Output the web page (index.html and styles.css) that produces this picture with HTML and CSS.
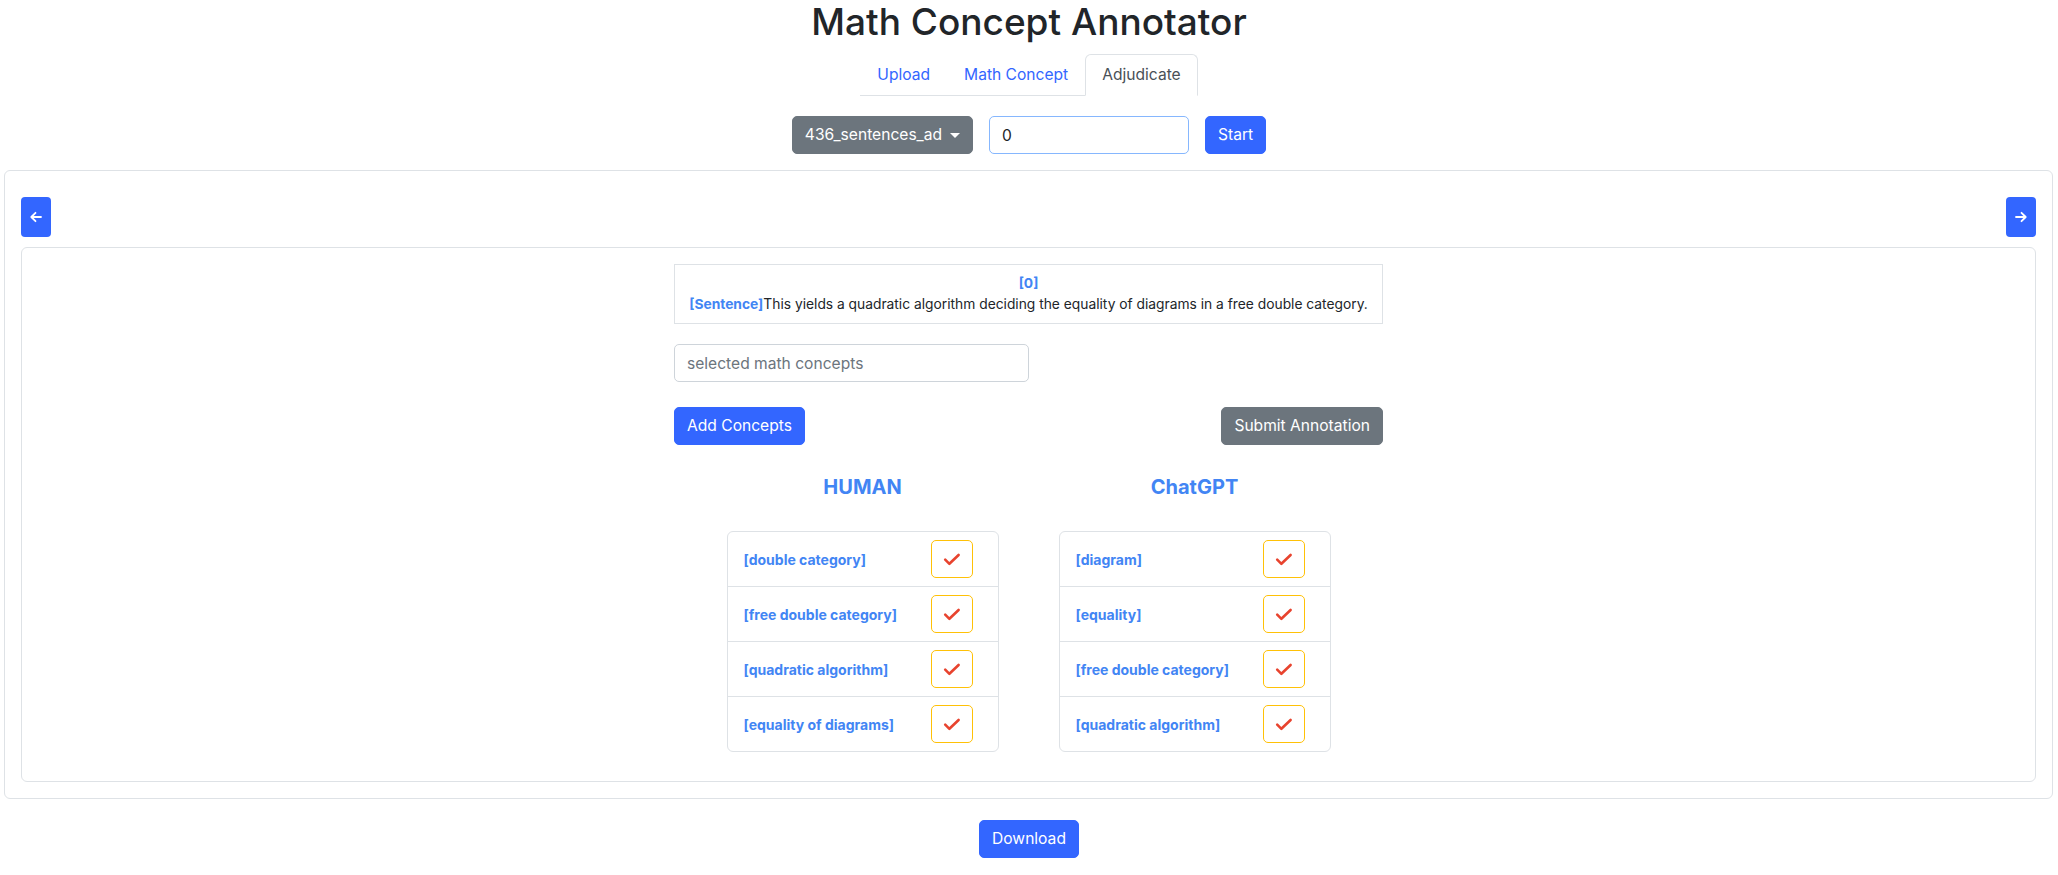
FILE: index.html
```html
<!DOCTYPE html>
<html lang="en">
<head>
<meta charset="utf-8">
<title>Math Concept Annotator</title>
<link rel="stylesheet" href="styles.css">
</head>
<body>
<div class="page">
  <h1 class="title">Math Concept Annotator</h1>
  <ul class="tabs">
    <li><a class="tab">Upload</a></li>
    <li><a class="tab">Math Concept</a></li>
    <li><a class="tab active">Adjudicate</a></li>
  </ul>
  <div class="controls">
    <button class="btn btn-secondary dropdown-toggle">436_sentences_ad<span class="caret"></span></button>
    <input class="field index-field" type="text" value="0">
    <button class="btn btn-primary">Start</button>
  </div>

  <div class="card outer-card">
    <div class="pager">
      <button class="arrow-btn" aria-label="previous">
        <svg width="12" height="12" viewBox="0 0 12 12"><path d="M11 6H1.5M5.5 1.8L1.3 6l4.2 4.2" fill="none" stroke="#fff" stroke-width="1.8" stroke-linecap="round" stroke-linejoin="round"/></svg>
      </button>
      <button class="arrow-btn" aria-label="next">
        <svg width="12" height="12" viewBox="0 0 12 12"><path d="M1 6h9.5M6.5 1.8L10.7 6l-4.2 4.2" fill="none" stroke="#fff" stroke-width="1.8" stroke-linecap="round" stroke-linejoin="round"/></svg>
      </button>
    </div>
    <div class="card inner-card">
      <div class="content">
        <div class="sentence-box">
          <div class="tag">[0]</div>
          <div><span class="tag">[Sentence]</span>This yields a quadratic algorithm deciding the equality of diagrams in a free double category.</div>
        </div>
        <input class="field concepts-field" type="text" placeholder="selected math concepts">
        <div class="actions">
          <button class="btn btn-primary">Add Concepts</button>
          <button class="btn btn-secondary">Submit Annotation</button>
        </div>
        <div class="compare">
          <div class="column">
            <h5 class="col-title">HUMAN</h5>
            <div class="concept-list">
              <div class="concept-row"><span class="concept">[double category]</span><button class="check-btn"><svg width="18" height="13" viewBox="0 0 18 13"><path d="M2.2 6.6l4.2 4.2 9.2-8.8" fill="none" stroke="#e8432e" stroke-width="2.6" stroke-linecap="round" stroke-linejoin="round"/></svg></button></div>
              <div class="concept-row"><span class="concept">[free double category]</span><button class="check-btn"><svg width="18" height="13" viewBox="0 0 18 13"><path d="M2.2 6.6l4.2 4.2 9.2-8.8" fill="none" stroke="#e8432e" stroke-width="2.6" stroke-linecap="round" stroke-linejoin="round"/></svg></button></div>
              <div class="concept-row"><span class="concept">[quadratic algorithm]</span><button class="check-btn"><svg width="18" height="13" viewBox="0 0 18 13"><path d="M2.2 6.6l4.2 4.2 9.2-8.8" fill="none" stroke="#e8432e" stroke-width="2.6" stroke-linecap="round" stroke-linejoin="round"/></svg></button></div>
              <div class="concept-row"><span class="concept">[equality of diagrams]</span><button class="check-btn"><svg width="18" height="13" viewBox="0 0 18 13"><path d="M2.2 6.6l4.2 4.2 9.2-8.8" fill="none" stroke="#e8432e" stroke-width="2.6" stroke-linecap="round" stroke-linejoin="round"/></svg></button></div>
            </div>
          </div>
          <div class="column">
            <h5 class="col-title">ChatGPT</h5>
            <div class="concept-list">
              <div class="concept-row"><span class="concept">[diagram]</span><button class="check-btn"><svg width="18" height="13" viewBox="0 0 18 13"><path d="M2.2 6.6l4.2 4.2 9.2-8.8" fill="none" stroke="#e8432e" stroke-width="2.6" stroke-linecap="round" stroke-linejoin="round"/></svg></button></div>
              <div class="concept-row"><span class="concept">[equality]</span><button class="check-btn"><svg width="18" height="13" viewBox="0 0 18 13"><path d="M2.2 6.6l4.2 4.2 9.2-8.8" fill="none" stroke="#e8432e" stroke-width="2.6" stroke-linecap="round" stroke-linejoin="round"/></svg></button></div>
              <div class="concept-row"><span class="concept">[free double category]</span><button class="check-btn"><svg width="18" height="13" viewBox="0 0 18 13"><path d="M2.2 6.6l4.2 4.2 9.2-8.8" fill="none" stroke="#e8432e" stroke-width="2.6" stroke-linecap="round" stroke-linejoin="round"/></svg></button></div>
              <div class="concept-row"><span class="concept">[quadratic algorithm]</span><button class="check-btn"><svg width="18" height="13" viewBox="0 0 18 13"><path d="M2.2 6.6l4.2 4.2 9.2-8.8" fill="none" stroke="#e8432e" stroke-width="2.6" stroke-linecap="round" stroke-linejoin="round"/></svg></button></div>
            </div>
          </div>
        </div>
      </div>
    </div>
  </div>

  <div class="download-row">
    <button class="btn btn-primary">Download</button>
  </div>
</div>
</body>
</html>
```

FILE: styles.css
```css
* { box-sizing: border-box; }

html, body {
  margin: 0;
  padding: 0;
  background: #fff;
}

body {
  font-family: Inter, "Noto Sans", "Liberation Sans", sans-serif;
  font-size: 16px;
  line-height: 1.5;
  color: #212529;
}

.page {
  display: flex;
  flex-direction: column;
  align-items: center;
}

.title {
  margin: 0;
  font-size: 37px;
  font-weight: 500;
  line-height: 44px;
  color: #212529;
}

.tabs {
  list-style: none;
  margin: 10px 0 0;
  padding: 0;
  display: flex;
  border-bottom: 1px solid #dee2e6;
}

.tab {
  display: block;
  padding: 8px 16px;
  margin-bottom: -1px;
  border: 1px solid transparent;
  border-top-left-radius: 6px;
  border-top-right-radius: 6px;
  color: #3366ff;
  font-size: 15.6px;
  line-height: 24px;
  cursor: pointer;
}

.tab.active {
  color: #495057;
  background: #fff;
  border-color: #dee2e6 #dee2e6 #fff;
}

.controls {
  margin-top: 20px;
  display: flex;
  gap: 16px;
  align-items: center;
}

.btn {
  font-family: inherit;
  font-size: 15.6px;
  line-height: 24px;
  padding: 6px 12px;
  border: 1px solid transparent;
  border-radius: 5px;
  color: #fff;
  cursor: pointer;
  white-space: nowrap;
}

.btn-primary {
  background: #3366ff;
  border-color: #3366ff;
}

.btn-secondary {
  background: #6c757d;
  border-color: #6c757d;
}

.dropdown-toggle {
  display: inline-flex;
  align-items: center;
}

.caret {
  display: inline-block;
  margin-left: 8px;
  width: 0;
  height: 0;
  border-top: 5px solid #fff;
  border-left: 5px solid transparent;
  border-right: 5px solid transparent;
}

.field {
  font-family: inherit;
  font-size: 15.6px;
  line-height: 24px;
  height: 38px;
  padding: 6px 12px;
  border: 1px solid #ced4da;
  border-radius: 5px;
  color: #212529;
  background: #fff;
  outline: none;
}

.field::placeholder {
  color: #6c757d;
}

.index-field {
  width: 200px;
  border-color: #86b7fe;
}

.card {
  border: 1px solid #dee2e6;
  border-radius: 6px;
  background: #fff;
}

.outer-card {
  align-self: stretch;
  margin: 16px 5px 0 4px;
  padding: 16px;
}

.pager {
  margin-top: 10px;
  display: flex;
  justify-content: space-between;
}

.arrow-btn {
  width: 30px;
  height: 40px;
  padding: 0;
  border: none;
  border-radius: 4px;
  background: #3366ff;
  display: flex;
  align-items: center;
  justify-content: center;
  cursor: pointer;
}

.inner-card {
  margin-top: 10px;
  padding: 16px 16px 29px;
}

.content {
  width: 709px;
  margin: 0 auto;
}

.sentence-box {
  border: 1px solid #dee2e6;
  padding: 8px;
  text-align: center;
  font-size: 13.8px;
  line-height: 21px;
  color: #212529;
}

.tag {
  color: #4285f4;
  font-weight: 700;
}

.concepts-field {
  display: block;
  margin-top: 20px;
  width: 355px;
}

.actions {
  margin-top: 25px;
  display: flex;
  justify-content: space-between;
}

.compare {
  display: flex;
  justify-content: center;
}

.column {
  width: 332px;
  display: flex;
  flex-direction: column;
  align-items: center;
}

.col-title {
  margin: 30px 0 0;
  font-size: 20px;
  line-height: 24px;
  font-weight: 700;
  color: #4285f4;
}

.concept-list {
  margin-top: 32px;
  width: 272px;
  border: 1px solid #dee2e6;
  border-radius: 6px;
}

.concept-row {
  display: flex;
  align-items: center;
  justify-content: space-between;
  padding: 8px 25px 8px 16px;
}

.concept-row + .concept-row {
  border-top: 1px solid #dee2e6;
}

.concept {
  font-size: 14px;
  font-weight: 700;
  color: #4285f4;
}

.check-btn {
  width: 42px;
  height: 38px;
  padding: 0;
  border: 1px solid #ffc107;
  border-radius: 5px;
  background: #fff;
  display: flex;
  align-items: center;
  justify-content: center;
  cursor: pointer;
}

.download-row {
  margin-top: 21px;
  display: flex;
  justify-content: center;
}
```
